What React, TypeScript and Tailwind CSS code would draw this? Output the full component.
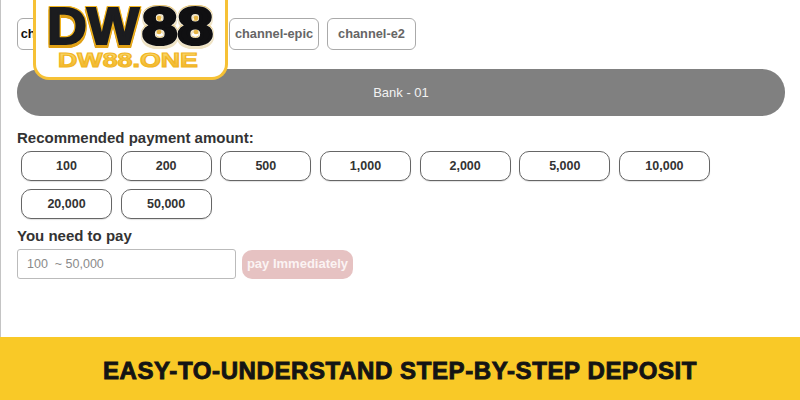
import React from 'react'

const amounts = ['100', '200', '500', '1,000', '2,000', '5,000', '10,000', '20,000', '50,000']

const tabs = [
  { name: 'channel-pay', width: 'w-[82px]', color: 'text-[#111]' },
  { name: 'channel-vip', width: 'w-[114px]', color: 'text-[#666]' },
  { name: 'channel-epic', width: 'w-[90px]', color: 'text-[#666]' },
  { name: 'channel-e2', width: 'w-[89px]', color: 'text-[#666]' },
]

function Logo() {
  return (
    <div className="absolute left-[33px] top-0 h-[80px] w-[195px] overflow-hidden rounded-b-[16px] border-[3px] border-t-0 border-[#f6c135] bg-white">
      <svg className="block h-full w-full" viewBox="36 0 189 77" fontFamily="'Liberation Sans', sans-serif" fontWeight="700">
        <defs>
          <linearGradient id="gold" x1="0" y1="0" x2="0" y2="1">
            <stop offset="0" stopColor="#fbe07a" />
            <stop offset="1" stopColor="#efae1e" />
          </linearGradient>
        </defs>
        <text
          x="47"
          y="44"
          fontSize="52"
          textLength="92"
          lengthAdjust="spacingAndGlyphs"
          fill="#1b1c1f"
          stroke="#1b1c1f"
          strokeWidth="2"
          className="[filter:drop-shadow(1px_0_0_#f3b51d)_drop-shadow(-1px_0_0_#f3b51d)_drop-shadow(0_-1px_0_#f3b51d)_drop-shadow(0_3px_0_#e0a015)]"
        >
          DW
        </text>
        <text
          x="142"
          y="44"
          fontSize="52"
          textLength="71"
          lengthAdjust="spacingAndGlyphs"
          fill="#101012"
          stroke="#101012"
          strokeWidth="3"
          className="[filter:drop-shadow(1px_0_0_#f7f1e1)_drop-shadow(-1px_0_0_#f7f1e1)_drop-shadow(0_-1px_0_#e9c877)_drop-shadow(0_3px_0_#efe3c4)]"
        >
          88
        </text>
        <ellipse cx="159" cy="18" rx="2.4" ry="2.2" fill="#e7b545" />
        <ellipse cx="196" cy="18" rx="2.4" ry="2.2" fill="#e7b545" />
        <ellipse cx="159" cy="32" rx="2.4" ry="2.2" fill="#e7b545" />
        <ellipse cx="196" cy="32" rx="2.4" ry="2.2" fill="#e7b545" />
        <text
          x="58"
          y="67"
          fontSize="20"
          textLength="140"
          lengthAdjust="spacingAndGlyphs"
          fill="url(#gold)"
          stroke="#f2b624"
          strokeWidth="1.1"
        >
          DW88.ONE
        </text>
      </svg>
    </div>
  )
}

export default function App() {
  return (
    <div className="relative flex h-[400px] w-[800px] flex-col overflow-hidden bg-white font-['Liberation_Sans',Arial,sans-serif]">
      <div className="flex-1 border-l border-[#c4c4c4] pl-4 pr-[15px] pt-[18px]">
        <div className="flex gap-2">
          {tabs.map((t) => (
            <div
              key={t.name}
              className={`flex h-[32px] items-center justify-center whitespace-nowrap rounded-[6px] border border-[#aaa] text-[12.8px] font-bold ${t.width} ${t.color}`}
            >
              {t.name}
            </div>
          ))}
        </div>

        <div className="mt-[19px] flex h-[47px] items-center justify-center rounded-[23px] bg-[#808080] text-[13px] text-[#f2f2f2]">
          Bank - 01
        </div>

        <div className="mt-[13px] text-[15px] font-bold leading-[17px] text-[#333]">
          Recommended payment amount:
        </div>
        <div className="mt-[5px] flex flex-wrap gap-x-[8.67px] gap-y-[8px] pl-1">
          {amounts.map((a) => (
            <button
              key={a}
              className="h-[30px] w-[91px] rounded-[10px] border border-[#666] bg-white text-[12.5px] font-bold text-[#333] shadow-[0_1px_1px_rgba(0,0,0,0.12)]"
            >
              {a}
            </button>
          ))}
        </div>

        <div className="mt-[8px] text-[15px] font-bold leading-[18px] text-[#333]">You need to pay</div>
        <div className="mt-[4px] flex items-center gap-[6px]">
          <div className="flex h-[30px] w-[219px] items-center whitespace-pre rounded-[3px] border border-[#bbb] pl-[9px] text-[12.5px] text-[#8a8a8a]">
            100  ~ 50,000
          </div>
          <button className="h-[29px] w-[111px] rounded-[10px] bg-[#e6c2c2] text-[13px] font-bold text-[#fbf3f3]">
            pay Immediately
          </button>
        </div>
      </div>

      <div className="flex h-[63px] items-center justify-center bg-[#f9c927] pt-1">
        <span className="text-[24px] font-bold tracking-[0.6px] text-[#141414] [-webkit-text-stroke:0.9px_#141414]">
          EASY-TO-UNDERSTAND STEP-BY-STEP DEPOSIT
        </span>
      </div>

      <Logo />
    </div>
  )
}
